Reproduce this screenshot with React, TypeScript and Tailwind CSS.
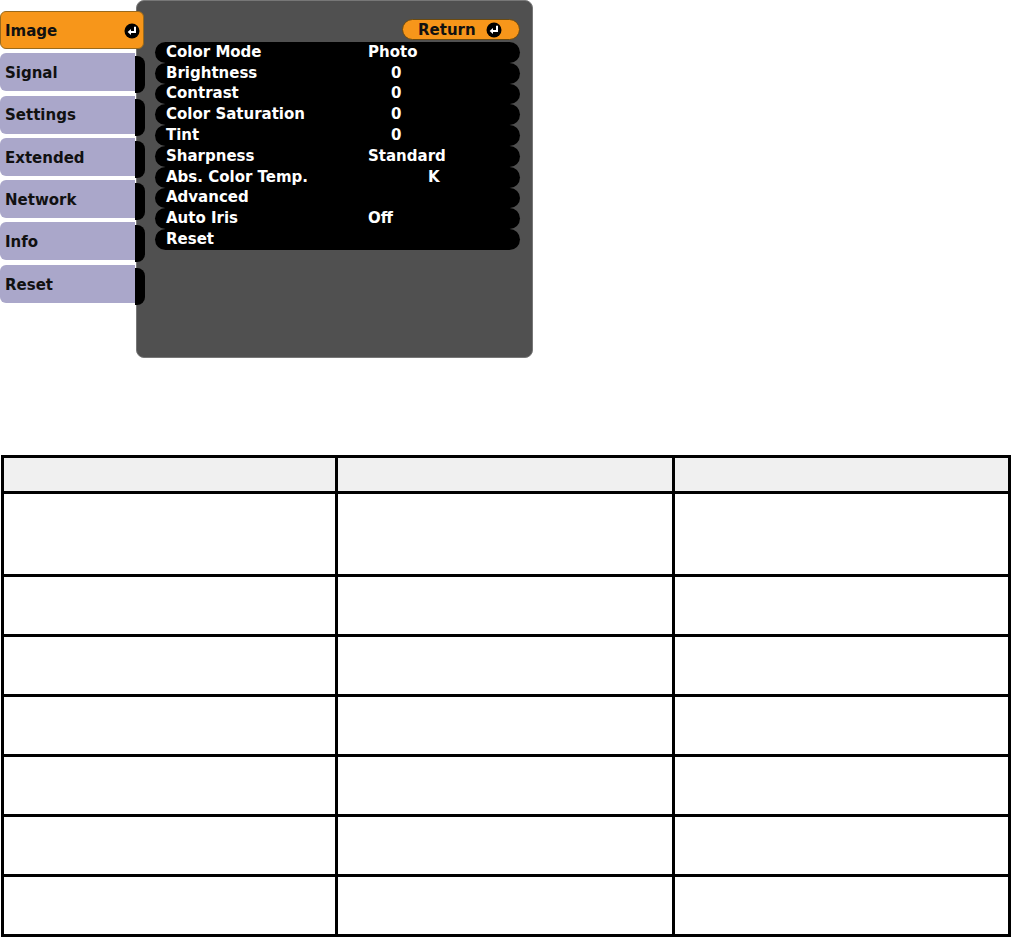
import React from 'react'

const tabs = ['Image', 'Signal', 'Settings', 'Extended', 'Network', 'Info', 'Reset']

const items = [
  { label: 'Color Mode', value: 'Photo', pad: 'pl-0' },
  { label: 'Brightness', value: '0', pad: 'pl-[23px]' },
  { label: 'Contrast', value: '0', pad: 'pl-[23px]' },
  { label: 'Color Saturation', value: '0', pad: 'pl-[23px]' },
  { label: 'Tint', value: '0', pad: 'pl-[23px]' },
  { label: 'Sharpness', value: 'Standard', pad: 'pl-0' },
  { label: 'Abs. Color Temp.', value: 'K', pad: 'pl-[60px]' },
  { label: 'Advanced', value: '', pad: 'pl-0' },
  { label: 'Auto Iris', value: 'Off', pad: 'pl-0' },
  { label: 'Reset', value: '', pad: 'pl-0' },
]

function EnterIcon({ size }: { size: number }) {
  return (
    <svg width={size} height={size} viewBox="0 0 16 16">
      <circle cx="8" cy="8" r="7.5" fill="#000" />
      <path d="M11 3.8 V9 H6.5" stroke="#fff" strokeWidth="2" fill="none" />
      <path d="M3.6 9 L7 6 L7 12 Z" fill="#fff" />
    </svg>
  )
}

function MenuScreen() {
  return (
    <div className="flex h-[358px]">
      {/* Tabs */}
      <div className="relative z-10 flex w-[145px] flex-col gap-[4.3px] pt-[11px]">
        {tabs.map((t, i) =>
          i === 0 ? (
            <div
              key={t}
              className="flex h-[38px] w-[144px] items-center justify-between rounded-[6px] border border-[#9a6a1c] bg-[#f7961a] pl-[4px] pr-[3px] pt-[2px] text-[15px] font-bold text-[#111]"
            >
              <span>{t}</span>
              <EnterIcon size={16} />
            </div>
          ) : (
            <div key={t} className="flex h-[38px]">
              <div className="flex w-[135px] items-center rounded-l-[6px] bg-[#aaa7ca] pl-[5px] pt-[2px] text-[15px] font-bold text-[#111]">
                {t}
              </div>
              <div className="mt-[3px] h-[37px] w-[10px] rounded-r-[8px] bg-black" />
            </div>
          ),
        )}
      </div>

      {/* Panel */}
      <div className="-ml-[9px] h-[358px] w-[397px] rounded-[8px] border border-[#777] bg-[#505050] pl-[18px] pr-[12px] pt-[18px]">
        <div className="flex justify-end">
          <div className="flex h-[21px] w-[118px] items-center gap-[10px] rounded-full border border-[#6b4a10] bg-[#f7961a] pl-[15px] pt-[1px] text-[15px] font-bold leading-none text-[#111]">
            <span>Return</span>
            <EnterIcon size={16} />
          </div>
        </div>
        <div className="mt-[2px] flex flex-col">
          {items.map((it) => (
            <div
              key={it.label}
              className="flex h-[20.8px] items-center rounded-full bg-black pl-[11px] text-[15px] font-bold leading-none text-white"
            >
              <span className="w-[202px] whitespace-nowrap">{it.label}</span>
              <span className={it.pad}>{it.value}</span>
            </div>
          ))}
        </div>
      </div>
    </div>
  )
}

function EmptyTable() {
  const rows = ['h-[83px]', 'h-[60px]', 'h-[60px]', 'h-[60px]', 'h-[60px]', 'h-[60px]', 'h-[60px]']
  return (
    <div className="ml-[1px] mt-[97px] w-[1010px] border-l-[3px] border-t-[3px] border-black">
      <div className="grid grid-cols-[334px_337px_336px] bg-[#f0f0f0]">
        <div className="h-[36px] border-b-[3px] border-r-[3px] border-black" />
        <div className="h-[36px] border-b-[3px] border-r-[3px] border-black" />
        <div className="h-[36px] border-b-[3px] border-r-[3px] border-black" />
      </div>
      {rows.map((h, i) => (
        <div key={i} className="grid grid-cols-[334px_337px_336px]">
          <div className={`${h} border-b-[3px] border-r-[3px] border-black`} />
          <div className={`${h} border-b-[3px] border-r-[3px] border-black`} />
          <div className={`${h} border-b-[3px] border-r-[3px] border-black`} />
        </div>
      ))}
    </div>
  )
}

export default function App() {
  return (
    <div className="h-[937px] w-[1011px] overflow-hidden bg-white font-['DejaVu_Sans',sans-serif]">
      <MenuScreen />
      <EmptyTable />
    </div>
  )
}
